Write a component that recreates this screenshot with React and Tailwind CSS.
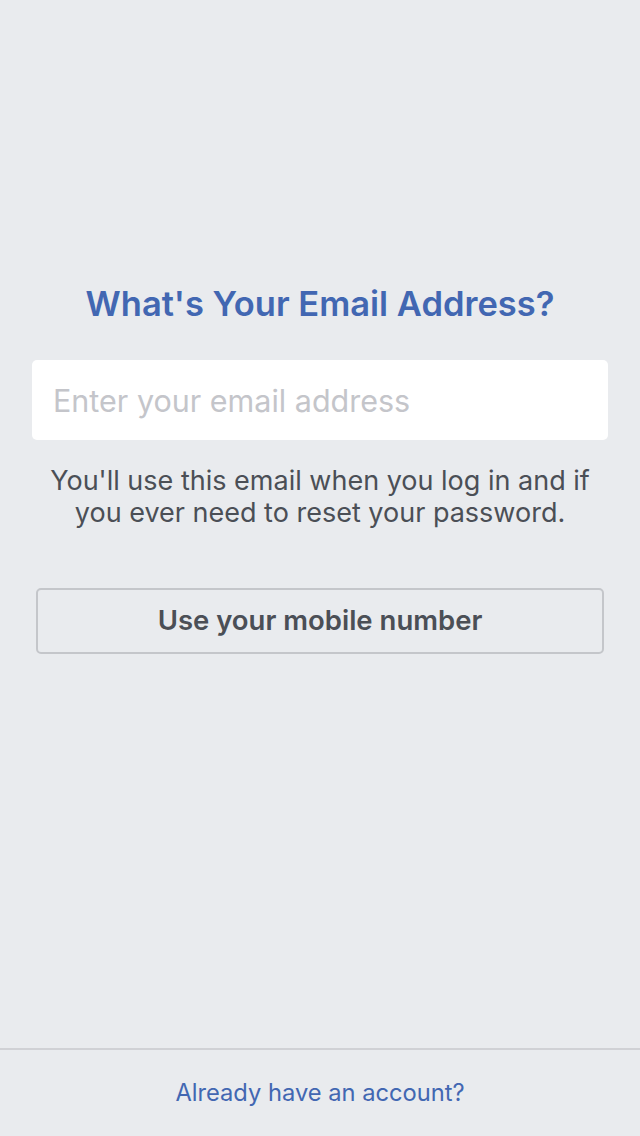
import React, { useState } from 'react';

const App = () => {
  const [email, setEmail] = useState('');

  return (
    <div className="min-h-[1136px] w-[640px] bg-[#e9ebee] flex flex-col font-['Inter',sans-serif]">
      <div className="flex-1 flex flex-col px-8 pt-[282px]">
        <h1 className="text-center text-[34.5px] leading-[44px] font-semibold text-[#4267b2]">
          What's Your Email Address?
        </h1>

        <input
          type="email"
          value={email}
          onChange={(e) => setEmail(e.target.value)}
          placeholder="Enter your email address"
          className="mt-[34px] h-[80px] w-full bg-white rounded-[5px] px-[21px] text-[30.5px] text-[#1d2129] placeholder:text-[#c4c5ca] outline-none"
        />

        <p className="mt-[25px] text-center text-[27px] leading-[32px] text-[#4b4f56]">
          You'll use this email when you log in and if you ever need to reset your password.
        </p>

        <button className="mt-[59px] mx-1 h-[66px] rounded-[5px] border-2 border-[#c4c6ca] text-[27.5px] font-semibold text-[#4b4f56]">
          Use your mobile number
        </button>
      </div>

      <div className="border-t-2 border-[#d0d1d5] h-[88px] flex items-center justify-center">
        <a href="#" className="text-[23.7px] text-[#4267b2]">
          Already have an account?
        </a>
      </div>
    </div>
  );
};

export default App;
